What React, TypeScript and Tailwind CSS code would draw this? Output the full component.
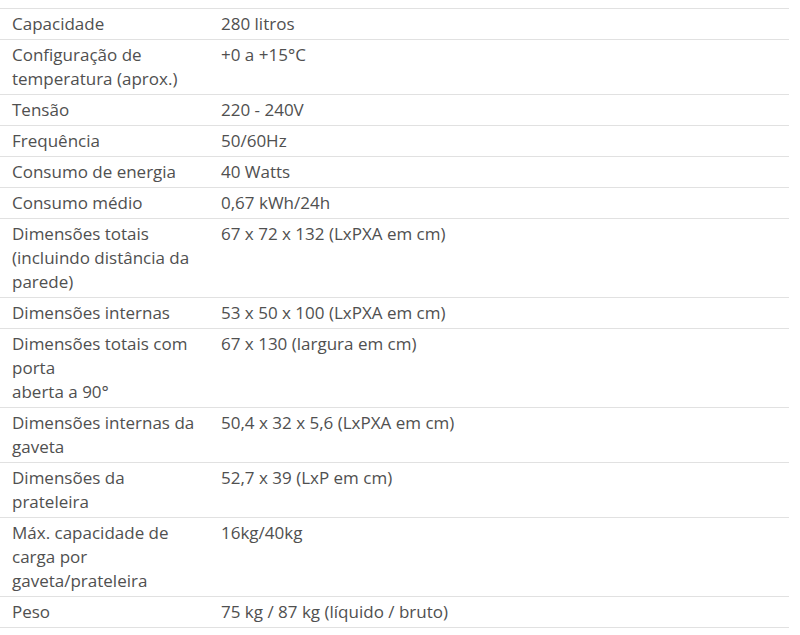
const specs: [string, string][] = [
  ["Capacidade", "280 litros"],
  ["Configuração de temperatura (aprox.)", "+0 a +15°C"],
  ["Tensão", "220 - 240V"],
  ["Frequência", "50/60Hz"],
  ["Consumo de energia", "40 Watts"],
  ["Consumo médio", "0,67 kWh/24h"],
  ["Dimensões totais (incluindo distância da parede)", "67 x 72 x 132 (LxPXA em cm)"],
  ["Dimensões internas", "53 x 50 x 100 (LxPXA em cm)"],
  ["Dimensões totais com porta\naberta a 90°", "67 x 130 (largura em cm)"],
  ["Dimensões internas da gaveta", "50,4 x 32 x 5,6 (LxPXA em cm)"],
  ["Dimensões da prateleira", "52,7 x 39 (LxP em cm)"],
  ["Máx. capacidade de carga por gaveta/prateleira", "16kg/40kg"],
  ["Peso", "75 kg / 87 kg (líquido / bruto)"],
]

export default function App() {
  return (
    <div className="bg-white w-[800px] h-[635px] pt-2" style={{ fontFamily: '"Open Sans", sans-serif' }}>
      <table className="w-[789px] border-collapse table-fixed text-[17px] leading-6 text-[#505050]">
        <colgroup>
          <col className="w-[209px]" />
          <col />
        </colgroup>
        <tbody>
          {specs.map(([label, value]) => (
            <tr key={label} className="border-y border-[#e1e1e1]">
              <td className="pl-3 pr-3 py-[3px] align-top whitespace-pre-line">{label}</td>
              <td className="pl-3 pr-3 py-[3px] align-top">{value}</td>
            </tr>
          ))}
        </tbody>
      </table>
    </div>
  )
}
